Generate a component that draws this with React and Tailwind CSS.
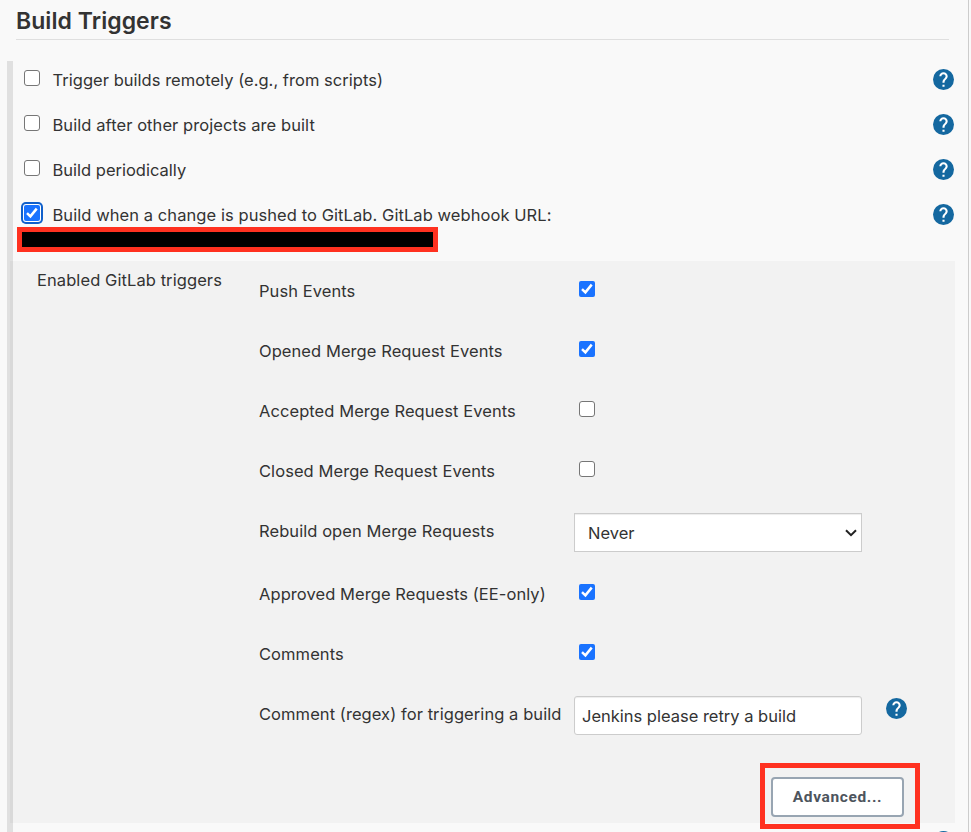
function HelpIcon() {
  return (
    <svg viewBox="2 2 20 20" className="block size-[21px] shrink-0" aria-label="Help">
      <circle cx="12" cy="12" r="10" fill="#1468a0" />
      <path
        fill="#fff"
        d="M13 19h-2v-2h2v2zm2.07-7.75l-.9.92C13.45 12.9 13 13.5 13 15h-2v-.5c0-1.1.45-2.1 1.17-2.83l1.24-1.26c.37-.36.59-.86.59-1.41 0-1.1-.9-2-2-2s-2 .9-2 2H8c0-2.21 1.79-4 4-4s4 1.79 4 4c0 .88-.36 1.68-.93 2.25z"
      />
    </svg>
  );
}

function Checkbox({ checked, focused }) {
  if (!checked) {
    return <span className="block size-4 shrink-0 rounded-[3px] border border-[#767676] bg-white" />;
  }
  return (
    <span
      className={
        focused
          ? "block size-4 shrink-0 rounded-[2px] bg-[#1a73ff] shadow-[0_0_0_1px_#fff,0_0_0_3px_#1060cb]"
          : "block size-4 shrink-0 rounded-[2px] bg-[#1a73ff]"
      }
    >
      <svg viewBox="0 0 16 16" className="block size-4" fill="none" stroke="#fff" strokeWidth="2.5">
        <path d="M3 8.2 L6.4 11.4 L12.7 3.6" />
      </svg>
    </span>
  );
}

const builds = [
  { label: "Trigger builds remotely (e.g., from scripts)", spacing: "tracking-[0.03px]" },
  { label: "Build after other projects are built", spacing: "tracking-[0.07px]" },
  { label: "Build periodically", spacing: "tracking-[0px]" },
  {
    label: "Build when a change is pushed to GitLab. GitLab webhook URL:",
    spacing: "tracking-[0.07px]",
    checked: true,
    focused: true,
  },
];

function TriggerRow({ label, spacing, checked, focused }) {
  return (
    <div className="flex h-[37px] items-center pr-[14px] pl-[11px]">
      <div className="-mt-[3px]">
        <Checkbox checked={checked} focused={focused} />
      </div>
      <span className={`mt-[2px] ml-[12.5px] grow whitespace-nowrap ${spacing}`}>{label}</span>
      <HelpIcon />
    </div>
  );
}

function EventRow({ label, tall, children }) {
  return (
    <div className={tall ? "flex h-[63px] shrink-0 items-start" : "flex h-[60px] shrink-0 items-start"}>
      <span className="mt-[18px] w-[315px] shrink-0 whitespace-nowrap leading-6 tracking-[0.07px]">{label}</span>
      {children}
    </div>
  );
}

function EventCheck({ checked }) {
  return (
    <div className="mt-5 ml-[5px]">
      <Checkbox checked={checked} />
    </div>
  );
}

export default function App() {
  return (
    <div className="flex h-[832px] w-[971px] overflow-hidden bg-[#f9f9f9] font-[Inter,'Liberation_Sans',sans-serif] text-[16.5px] text-[#333]">
      <div className="flex w-[969px] shrink-0 flex-col border-r border-[#ccc]">
        <h1 className="ml-4 flex h-10 w-[933px] shrink-0 items-center border-b border-[#dfdfdf] pt-[3px] text-[23px] font-semibold leading-none tracking-[0.06px]">
          Build Triggers
        </h1>
        <section className="mt-[21px] ml-[7px] h-[771px] shrink-0 border-l-[6px] border-[#e0e0e0]">
          <div className="flex flex-col gap-2">
            {builds.map((b) => (
              <TriggerRow key={b.label} {...b} />
            ))}
          </div>
          <div className="-mt-[6px] ml-1 h-[25px] w-[421px] border-[5px] border-[#ff3120] bg-black" />

          <div className="mt-[9px] -ml-[3px] flex h-[562px] w-[945px] bg-black/[0.028]">
            <div className="w-[249px] shrink-0 pt-[7px] pl-[27px] leading-6 tracking-[0.08px]">Enabled GitLab triggers</div>
            <div className="flex grow flex-col">
              <EventRow label="Push Events">
                <EventCheck checked />
              </EventRow>
              <EventRow label="Opened Merge Request Events">
                <EventCheck checked />
              </EventRow>
              <EventRow label="Accepted Merge Request Events">
                <EventCheck />
              </EventRow>
              <EventRow label="Closed Merge Request Events">
                <EventCheck />
              </EventRow>
              <EventRow label="Rebuild open Merge Requests" tall>
                <div className="mt-3 flex h-[39px] w-[288px] items-center justify-between border border-[#ccc] bg-white pr-1 pl-[13px] shadow-[inset_0_1px_1px_rgba(0,0,0,0.075)]">
                  <span className="mt-px">Never</span>
                  <svg viewBox="0 0 12 8" className="h-2 w-3" fill="none" stroke="#222" strokeWidth="2">
                    <path d="M1 1.2 L6 6.2 L11 1.2" />
                  </svg>
                </div>
              </EventRow>
              <EventRow label="Approved Merge Requests (EE-only)">
                <EventCheck checked />
              </EventRow>
              <EventRow label="Comments">
                <EventCheck checked />
              </EventRow>
              <EventRow label="Comment (regex) for triggering a build" tall>
                <div className="mt-3 flex h-[39px] w-[288px] items-center rounded-[3px] border border-[#ccc] bg-white pt-px pl-[7px] tracking-[-0.01px] shadow-[inset_0_1px_1px_rgba(0,0,0,0.075)]">
                  Jenkins please retry a build
                </div>
                <div className="mt-[14px] ml-6">
                  <HelpIcon />
                </div>
              </EventRow>
              <div className="mt-4 mr-[35px] flex h-[66px] w-[160px] shrink-0 self-end border-[5px] border-[#ff3120] pt-[9px] pl-[6px]">
                <div className="flex h-10 w-[133px] items-center justify-center rounded-[4px] border-2 border-[#98a5b2] bg-white pt-[2px] font-[Roboto,Inter,sans-serif] text-[15.5px] font-bold tracking-[0.62px] text-[#4d545d]">
                  Advanced...
                </div>
              </div>
            </div>
          </div>

          <div className="mt-2 flex justify-end pr-[14px]">
            <HelpIcon />
          </div>
        </section>
      </div>
    </div>
  );
}
